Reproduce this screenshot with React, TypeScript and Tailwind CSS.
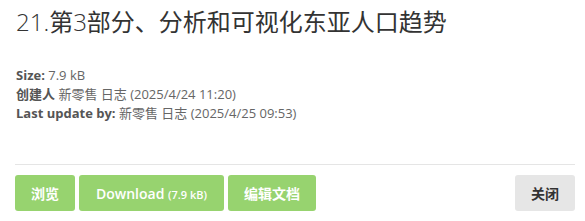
export default function App() {
  const font = { fontFamily: '"Open Sans", "Noto Sans CJK SC", sans-serif' }
  return (
    <div className="w-[585px] h-[221px] bg-white pl-[15px] pr-[10px] pt-[9px]" style={font}>
      <h3 className="pl-[1px] text-[24px] leading-[1.1] text-[#333] font-normal">
        <span className="font-light">21.</span>第<span className="font-light">3</span>部分、分析和可视化东亚人口趋势
      </h3>

      <div className="mt-[31px] pl-[1px] text-[13px] leading-[19px] text-[#666]">
        <div>
          <b className="font-bold text-[#555]">Size:</b> 7.9 kB
        </div>
        <div>
          <b className="font-bold text-[#555]">创建人</b> 新零售 日志 (2025/4/24 11:20)
        </div>
        <div>
          <b className="font-bold text-[#555]">Last update by:</b> 新零售 日志 (2025/4/25 09:53)
        </div>
      </div>

      <div className="mt-[41px] border-t border-[#e5e5e5] pt-[10px] flex justify-between">
        <div className="flex gap-[4px]">
          <button className="h-[36px] px-[16px] rounded-[3px] bg-[#97d36f] text-white text-[14px] font-semibold">
            浏览
          </button>
          <button className="h-[36px] px-[17px] rounded-[3px] bg-[#97d36f] text-white text-[14px] font-semibold">
            Download <span className="text-[11px]">(7.9 kB)</span>
          </button>
          <button className="h-[36px] px-[16px] rounded-[3px] bg-[#97d36f] text-white text-[14px] font-semibold">
            编辑文档
          </button>
        </div>
        <button className="h-[36px] px-[16px] rounded-[3px] bg-[#e6e6e6] text-[#333] text-[14px] font-semibold">
          关闭
        </button>
      </div>
    </div>
  )
}
